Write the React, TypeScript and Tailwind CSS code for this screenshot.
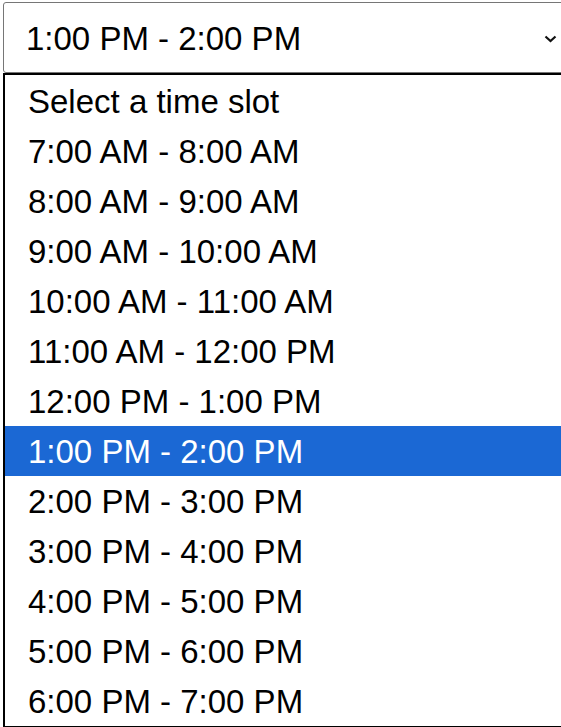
import React from "react";

const slots = [
  "Select a time slot",
  "7:00 AM - 8:00 AM",
  "8:00 AM - 9:00 AM",
  "9:00 AM - 10:00 AM",
  "10:00 AM - 11:00 AM",
  "11:00 AM - 12:00 PM",
  "12:00 PM - 1:00 PM",
  "1:00 PM - 2:00 PM",
  "2:00 PM - 3:00 PM",
  "3:00 PM - 4:00 PM",
  "4:00 PM - 5:00 PM",
  "5:00 PM - 6:00 PM",
  "6:00 PM - 7:00 PM",
];

export default function App() {
  return (
    <div
      className="relative w-[561px] h-[727px] overflow-hidden bg-white text-black"
      style={{ fontFamily: '"Liberation Sans", Arial, sans-serif' }}
    >
      <div className="ml-[3px] mt-[2px] h-[71px] w-[562px] border border-[#767676] rounded-[3px] flex items-center pl-[22px] pr-[7px] text-[33px] leading-none">
        <span className="pt-[1px]">1:00 PM - 2:00 PM</span>
        <svg className="ml-auto mt-[2px]" width="13" height="8" viewBox="0 0 13 8">
          <polyline points="1.5,1.5 6.5,6 11.5,1.5" fill="none" stroke="#111" strokeWidth="2.2" />
        </svg>
      </div>
      <div className="ml-[3px] w-[620px] border-2 border-black pt-[1px]">
        {slots.map((s, i) => (
          <div
            key={s}
            className={
              "h-[50px] flex items-center pl-[23px] text-[33px] leading-none whitespace-nowrap " +
              (i === 7 ? "bg-[#1b68d4] text-white" : "text-black")
            }
          >
            {s}
          </div>
        ))}
      </div>
    </div>
  );
}
